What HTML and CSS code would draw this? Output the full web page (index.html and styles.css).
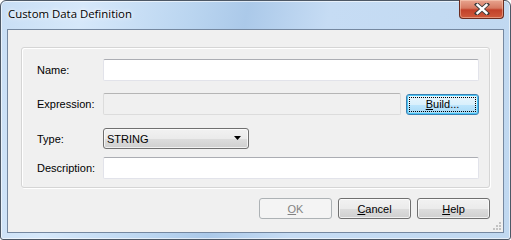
FILE: index.html
```html
<!DOCTYPE html>
<html lang="en">
<head>
  <meta charset="UTF-8" />
  <title>Custom Data Definition</title>
  <link rel="stylesheet" href="styles.css">
</head>
<body>
  <div class="window">
    <div class="titlebar">
      <span class="title">Custom Data Definition</span>
      <div class="close-btn">
        <svg width="16" height="12" viewBox="0 0 16 12">
          <path d="M3 1.5 L13 10.5 M13 1.5 L3 10.5" stroke="#3b3b3b" stroke-width="4.2" stroke-linecap="square"/>
          <path d="M3.5 2 L12.5 10 M12.5 2 L3.5 10" stroke="#ffffff" stroke-width="2.4" stroke-linecap="square"/>
        </svg>
      </div>
    </div>
    <div class="client">
      <div class="group">
        <div class="row row-name">
          <label class="lbl">Name:</label>
          <div class="field"><input class="txt" type="text"></div>
        </div>
        <div class="row row-expr">
          <label class="lbl">Expression:</label>
          <div class="field">
            <input class="txt txt-disabled" type="text" disabled>
            <button class="btn btn-default"><span class="focus-rect"><u>B</u>uild...</span></button>
          </div>
        </div>
        <div class="row row-type">
          <label class="lbl">Type:</label>
          <div class="field">
            <div class="combo">
              <span>STRING</span>
              <svg width="8" height="5" viewBox="0 0 8 5"><path d="M0 0 H7 L3.5 4 Z" fill="#000"/></svg>
            </div>
          </div>
        </div>
        <div class="row row-desc">
          <label class="lbl">Description:</label>
          <div class="field"><input class="txt" type="text"></div>
        </div>
      </div>
      <div class="actions">
        <button class="btn btn-disabled" disabled><u>O</u>K</button>
        <button class="btn"><u>C</u>ancel</button>
        <button class="btn"><u>H</u>elp</button>
      </div>
      <div class="grip">
        <svg width="10" height="10" viewBox="0 0 10 10" fill="#c3c3c3">
          <rect x="7" y="1" width="2" height="2"/>
          <rect x="4" y="4" width="2" height="2"/><rect x="7" y="4" width="2" height="2"/>
          <rect x="1" y="7" width="2" height="2"/><rect x="4" y="7" width="2" height="2"/><rect x="7" y="7" width="2" height="2"/>
        </svg>
      </div>
    </div>
  </div>
</body>
</html>
```

FILE: styles.css
```css
html, body {
  margin: 0;
  padding: 0;
  width: 100%;
  height: 100%;
  background: #ffffff;
  font-family: "Liberation Sans", Arial, sans-serif;
  font-size: 11px;
  color: #000;
}

.window {
  box-sizing: border-box;
  width: 511px;
  height: 240px;
  border: 1px solid #4d5866;
  border-radius: 6px 6px 3px 3px;
  padding: 0 6px 6px 6px;
  display: flex;
  flex-direction: column;
  background: linear-gradient(100deg, #c8def5 0%, #d6e8fa 15%, #bad5f0 35%, #abc9e9 45%, #c6dcf4 60%, #c0d8f0 100%);
  box-shadow: inset 0 0 0 1px rgba(255,255,255,0.6);
}

.titlebar {
  height: 28px;
  flex: none;
  display: flex;
  align-items: flex-start;
  position: relative;
}

.title {
  font-family: "Segoe UI", "Open Sans", "Liberation Sans", sans-serif;
  font-size: 11.4px;
  margin-top: 5px;
  margin-left: 1px;
  color: #000;
  text-shadow: 0 0 6px #ffffff, 0 0 3px #ffffff;
}

.close-btn {
  position: absolute;
  right: 0;
  top: -1px;
  width: 45px;
  height: 19px;
  box-sizing: border-box;
  border: 1px solid #6b2c20;
  border-top: none;
  border-radius: 0 0 4px 4px;
  background: linear-gradient(#e8a590 0%, #d67a62 45%, #c2412a 55%, #cf5a3c 100%);
  display: flex;
  align-items: center;
  justify-content: center;
  box-shadow: inset 0 0 0 1px rgba(255,220,200,0.45);
}

.client {
  flex: 1;
  box-sizing: border-box;
  background: #f0f0f0;
  border: 1px solid #7588a0;
  padding: 17px 13px 0 13px;
  position: relative;
}

.group {
  border: 1px solid #d5d5d5;
  border-radius: 3px;
  box-shadow: inset 1px 1px 0 #ffffff, 1px 1px 0 #ffffff;
  padding: 11px 10px 8px 15px;
}

.row {
  display: flex;
  align-items: center;
}

.row-expr { margin-top: 12px; }
.row-type { margin-top: 13px; }
.row-desc { margin-top: 8px; }

.lbl {
  width: 66px;
  flex: none;
  color: #000;
}

.field {
  flex: 1;
  display: flex;
  align-items: center;
}

.txt {
  box-sizing: border-box;
  height: 22px;
  flex: 1;
  margin: 0;
  border: 1px solid #e2e3ea;
  border-top-color: #abadb3;
  border-radius: 2px;
  background: #ffffff;
  outline: none;
  font: inherit;
}

.txt-disabled {
  background: #f0f0f0;
  border-color: #dcdcdc;
  border-top-color: #b5b5b5;
}

.btn {
  box-sizing: border-box;
  width: 73px;
  height: 21px;
  margin: 0;
  padding: 0;
  font: inherit;
  color: #000;
  border: 1px solid #707070;
  border-radius: 3px;
  background: linear-gradient(#f2f2f2 0%, #ebebeb 50%, #dddddd 51%, #cfcfcf 100%);
  box-shadow: inset 0 0 0 1px rgba(255,255,255,0.7);
}

.btn-default {
  margin-left: 5px;
  height: 21px;
  border-color: #3c7fb1;
  background: linear-gradient(#eaf6fd 0%, #d9f0fc 50%, #bee6fd 51%, #a7d9f5 100%);
  box-shadow: inset 0 0 0 1px #48c6f5;
  padding: 2px;
}

.focus-rect {
  display: flex;
  align-items: center;
  justify-content: center;
  height: 100%;
  box-sizing: border-box;
  border: 1px dotted #000;
}

.btn-disabled {
  color: #838383;
  border-color: #adb2b5;
  background: #f4f4f4;
  box-shadow: none;
}

.combo {
  box-sizing: border-box;
  width: 146px;
  height: 21px;
  border: 1px solid #707070;
  border-radius: 3px;
  background: linear-gradient(#f2f2f2 0%, #ebebeb 50%, #dddddd 51%, #cfcfcf 100%);
  box-shadow: inset 0 0 0 1px rgba(255,255,255,0.7);
  display: flex;
  align-items: center;
  justify-content: space-between;
  padding: 0 6px 0 3px;
}

.actions {
  display: flex;
  justify-content: flex-end;
  gap: 6px;
  margin-top: 10px;
}

.grip {
  position: absolute;
  right: 1px;
  bottom: 1px;
  line-height: 0;
}
```
